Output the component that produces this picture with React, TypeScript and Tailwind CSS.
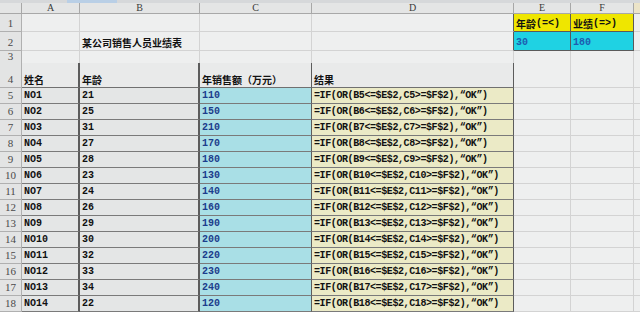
import type { ReactNode } from "react";

const GRID = "grid grid-cols-[22px_58px_120px_112px_202px_57px_63px_6px]";
const MONO = "font-['Liberation_Mono','Noto_Sans_CJK_SC',monospace] font-bold text-[10px] leading-none";
const CJK = "font-['Noto_Sans_CJK_SC',sans-serif] font-bold text-[10px] leading-none";

const names = ["NO1", "NO2", "NO3", "NO4", "NO5", "NO6", "NO7", "NO8", "NO9", "NO10", "NO11", "NO12", "NO13", "NO14"];
const ages = [21, 25, 31, 27, 28, 23, 24, 26, 29, 30, 32, 33, 34, 22];
const sales = [110, 150, 210, 170, 180, 130, 140, 160, 190, 200, 220, 230, 240, 120];

function RowHead({ n }: { n?: number }) {
  return (
    <div className="flex items-end justify-center pb-[2px] border-r border-b border-[#b0b0b0] bg-[#e3e4e4] font-['Liberation_Serif',serif] text-[11px] leading-none text-[#4a4a4a]">
      {n}
    </div>
  );
}

function Blank({ className = "" }: { className?: string }) {
  return <div className={`border-r border-b border-[#d3d3d3] bg-[#eeefef] ${className}`} />;
}

function Cell({ className, children }: { className: string; children?: ReactNode }) {
  return <div className={`flex items-end pl-[2px] pb-[2px] overflow-hidden whitespace-nowrap ${className}`}>{children}</div>;
}

export default function App() {
  return (
    <div className="w-[640px] h-[312px] overflow-hidden bg-[#eeefef] text-[#111]">
      {/* top strip */}
      <div className="flex h-[3px] bg-[#d6d8da]">
        <div className="w-[67px]" />
        <div className="w-[50px] bg-[#b9cfe6]" />
      </div>

      {/* column letters */}
      <div className={`${GRID} h-[11px] bg-[#e4e5e5] font-['Liberation_Serif',serif] text-[10px] leading-none text-[#3a3a3a]`}>
        <div className="border-r border-b border-[#a8a8a8]" />
        {["A", "B", "C", "D", "E", "F"].map((c) => (
          <div key={c} className="flex items-center justify-center border-r border-b border-[#a8a8a8]">
            {c}
          </div>
        ))}
        <div className="border-b border-[#a8a8a8] bg-[#ece4c8]" />
      </div>

      {/* row 1 */}
      <div className={`${GRID} h-[18px]`}>
        <RowHead n={1} />
        <Blank />
        <Blank />
        <Blank />
        <Blank className="border-r-[#5a5a5a]" />
        <Cell className={`${CJK} bg-[#efe600] border-r border-b border-[#5a5a5a]`}>
          年龄<span className={MONO}>(=&lt;)</span>
        </Cell>
        <Cell className={`${CJK} bg-[#efe600] border-r border-b border-[#5a5a5a]`}>
          业绩<span className={MONO}>(=&gt;)</span>
        </Cell>
        <Blank className="border-r-0" />
      </div>

      {/* row 2 */}
      <div className={`${GRID} h-[19px]`}>
        <RowHead n={2} />
        <Blank />
        <Cell className="border-r border-b border-[#d3d3d3]">
          <span className={`${CJK} text-[10.5px]`}>某公司销售人员业绩表</span>
        </Cell>
        <Blank />
        <Blank className="border-r-[#5a5a5a]" />
        <Cell className={`${MONO} text-[#1d5cb0] bg-[#1fd2e3] border-r border-b border-[#5a5a5a]`}>30</Cell>
        <Cell className={`${MONO} text-[#1d5cb0] bg-[#1fd2e3] border-r border-b border-[#5a5a5a]`}>180</Cell>
        <Blank className="border-r-0" />
      </div>

      {/* row 3 */}
      <div className={`${GRID} h-[12px]`}>
        <RowHead n={3} />
        <Blank className="border-b-[#666]" />
        <Blank className="border-b-[#666]" />
        <Blank className="border-b-[#666]" />
        <Blank className="border-b-[#666]" />
        <Blank />
        <Blank />
        <Blank className="border-r-0" />
      </div>

      {/* row 4 - table headers */}
      <div className={`${GRID} h-[25px]`}>
        <RowHead n={4} />
        <Cell className={`${CJK} bg-[#e9eaea] border-r-2 border-b border-r-[#5c5c5c] border-b-[#707070]`}>姓名</Cell>
        <Cell className={`${CJK} bg-[#e9eaea] border-r-2 border-b border-r-[#5c5c5c] border-b-[#707070]`}>年龄</Cell>
        <Cell className={`${CJK} bg-[#e9eaea] border-r border-b border-r-[#5c5c5c] border-b-[#707070]`}>年销售额（万元）</Cell>
        <Cell className={`${CJK} bg-[#e9eaea] border-r border-b border-r-[#5c5c5c] border-b-[#707070]`}>结果</Cell>
        <Blank />
        <Blank />
        <Blank className="border-r-0" />
      </div>

      {/* data rows */}
      {names.map((name, i) => {
        const r = i + 5;
        return (
          <div key={name} className={`${GRID} h-[16px]`}>
            <RowHead n={r} />
            <Cell className={`${MONO} bg-[#e4e6e6] border-r-2 border-b border-r-[#5c5c5c] border-b-[#7a7a7a]`}>{name}</Cell>
            <Cell className={`${MONO} bg-[#e4e6e6] border-r-2 border-b border-r-[#5c5c5c] border-b-[#7a7a7a]`}>{ages[i]}</Cell>
            <Cell className={`${MONO} text-[#1c3d8c] bg-[#a9dfe6] border-r border-b border-r-[#5c5c5c] border-b-[#7a7a7a]`}>{sales[i]}</Cell>
            <Cell className={`${MONO} tracking-[-0.4px] bg-[#ebeac6] border-r border-b border-r-[#5c5c5c] border-b-[#7a7a7a]`}>
              {`=IF(OR(B${r}<=$E$2,C${r}>=$F$2),“OK”)`}
            </Cell>
            <Blank />
            <Blank />
            <Blank className="border-r-0" />
          </div>
        );
      })}
    </div>
  );
}
